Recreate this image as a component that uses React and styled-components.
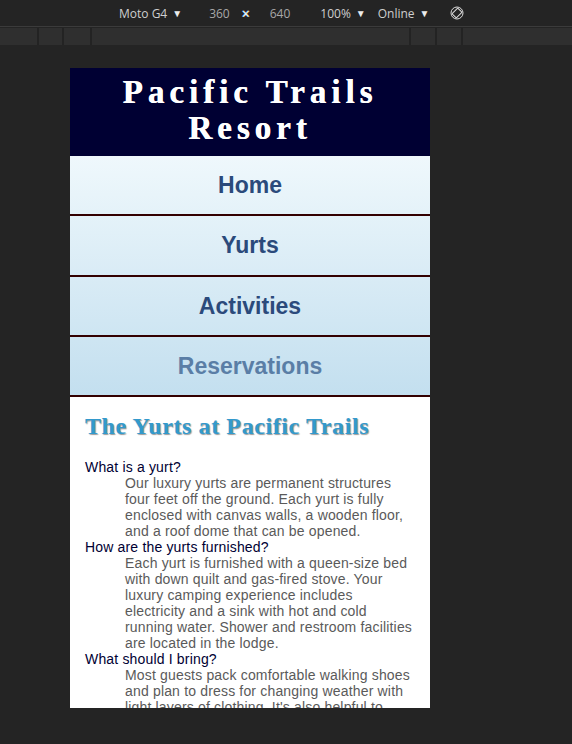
import React from "react";
import styled, { createGlobalStyle } from "styled-components";

const GlobalStyle = createGlobalStyle`
  html, body {
    margin: 0;
    padding: 0;
    background: #242424;
  }
  #root {
    width: 572px;
    height: 744px;
    overflow: hidden;
  }
`;

const Page = styled.div`
  width: 572px;
  height: 744px;
  background: #242424;
  font-family: "Open Sans", "Liberation Sans", sans-serif;
`;

const Toolbar = styled.div`
  display: flex;
  align-items: center;
  height: 27px;
  padding-left: 119px;
  border-bottom: 1px solid #3b3b3b;
  box-sizing: border-box;
  font-size: 12px;
  color: #cfcfcf;
`;

const ToolItem = styled.span`
  display: flex;
  align-items: center;
  gap: 5px;
  margin-right: ${props => props.gap || 0}px;
  color: ${props => (props.dim ? "#a8a8a8" : "#cfcfcf")};
  white-space: nowrap;
`;

const Caret = styled.span`
  font-size: 10px;
  color: #ececec;
`;

const Times = styled.span`
  margin-right: 20px;
  color: #f2f6fa;
  font-size: 14px;
  text-shadow: -0.5px 0 #3aa0ff, 0.5px 0 #e0a040;
`;

const Ruler = styled.div`
  display: flex;
  gap: 2px;
  height: 17px;
  margin-top: 1px;
  background: #232323;
`;

const RulerCell = styled.div`
  width: ${props => props.w}px;
  flex: ${props => (props.grow ? 1 : "none")};
  background: #2f2f2f;
`;

const Stage = styled.div`
  padding: 23px 0 0 70px;
`;

const Device = styled.div`
  width: 360px;
  height: 640px;
  overflow: hidden;
  background: #ffffff;
  font-family: "Liberation Sans", Arial, sans-serif;
`;

const Header = styled.header`
  background: #000033;
  color: #ffffff;
  text-align: center;
  padding: 6px 0 10px;
`;

const Title = styled.h1`
  margin: 0;
  font-family: "Liberation Serif", Georgia, serif;
  font-size: 33px;
  font-weight: bold;
  line-height: 36px;
  letter-spacing: 5px;
  text-shadow: 0.4px 0 0 #ffffff;
`;

const Nav = styled.nav`
  background: linear-gradient(#eff8fc, #c3dfef);
`;

const NavList = styled.ul`
  list-style: none;
  margin: 0;
  padding: 0;
`;

const NavItem = styled.li`
  height: 58px;
  border-bottom: 2px solid #330000;
  display: flex;
  align-items: center;
  justify-content: center;
  font-size: 23px;
  font-weight: bold;
  color: ${props => (props.current ? "#5a7ea6" : "#2b4a7b")};
  &:nth-child(2) {
    height: 59px;
  }
`;

const Main = styled.main`
  padding: 1px 15px 20px;
`;

const Heading = styled.h2`
  margin: 15px 0 19px;
  font-family: "Liberation Serif", Georgia, serif;
  font-size: 24px;
  letter-spacing: 0.6px;
  color: #3399cc;
  text-shadow: 1px 1px 1px #9a9a9a;
`;

const FaqList = styled.dl`
  margin: 0;
  font-size: 14px;
  letter-spacing: 0.17px;
`;

const Question = styled.dt`
  color: #000033;
`;

const Answer = styled.dd`
  margin: 0 0 0 40px;
  color: #5a5a5a;
`;

const RotateIcon = () => (
  <svg width="14" height="14" viewBox="0 0 14 14" fill="none" stroke="#dcdcdc" strokeWidth="1">
    <circle cx="7" cy="7" r="6" />
    <rect x="4" y="3" width="6" height="8" rx="0.8" transform="rotate(45 7 7)" />
  </svg>
);

const faqs = [
  {
    q: "What is a yurt?",
    a: "Our luxury yurts are permanent structures four feet off the ground. Each yurt is fully enclosed with canvas walls, a wooden floor, and a roof dome that can be opened."
  },
  {
    q: "How are the yurts furnished?",
    a: "Each yurt is furnished with a queen-size bed with down quilt and gas-fired stove. Your luxury camping experience includes electricity and a sink with hot and cold running water. Shower and restroom facilities are located in the lodge."
  },
  {
    q: "What should I bring?",
    a: "Most guests pack comfortable walking shoes and plan to dress for changing weather with light layers of clothing. It's also helpful to bring a flashlight and a day pack."
  }
];

const navItems = ["Home", "Yurts", "Activities", "Reservations"];

const App = () => {
  return (
    <Page>
      <GlobalStyle />
      <Toolbar>
        <ToolItem gap={27}>
          Moto G4 <Caret>▼</Caret>
        </ToolItem>
        <ToolItem dim gap={12}>360</ToolItem>
        <Times>×</Times>
        <ToolItem dim gap={30}>640</ToolItem>
        <ToolItem gap={12}>
          100% <Caret>▼</Caret>
        </ToolItem>
        <ToolItem gap={20}>
          Online <Caret>▼</Caret>
        </ToolItem>
        <RotateIcon />
      </Toolbar>
      <Ruler>
        <RulerCell w={37} />
        <RulerCell w={23} />
        <RulerCell w={26} />
        <RulerCell w={317} />
        <RulerCell w={24} />
        <RulerCell w={24} />
        <RulerCell grow />
      </Ruler>
      <Stage>
        <Device>
          <Header>
            <Title>
              Pacific Trails
              <br />
              Resort
            </Title>
          </Header>
          <Nav>
            <NavList>
              {navItems.map(item => (
                <NavItem key={item} current={item === "Reservations"}>
                  {item}
                </NavItem>
              ))}
            </NavList>
          </Nav>
          <Main>
            <Heading>The Yurts at Pacific Trails</Heading>
            <FaqList>
              {faqs.map(faq => (
                <React.Fragment key={faq.q}>
                  <Question>{faq.q}</Question>
                  <Answer>{faq.a}</Answer>
                </React.Fragment>
              ))}
            </FaqList>
          </Main>
        </Device>
      </Stage>
    </Page>
  );
};

export default App;
